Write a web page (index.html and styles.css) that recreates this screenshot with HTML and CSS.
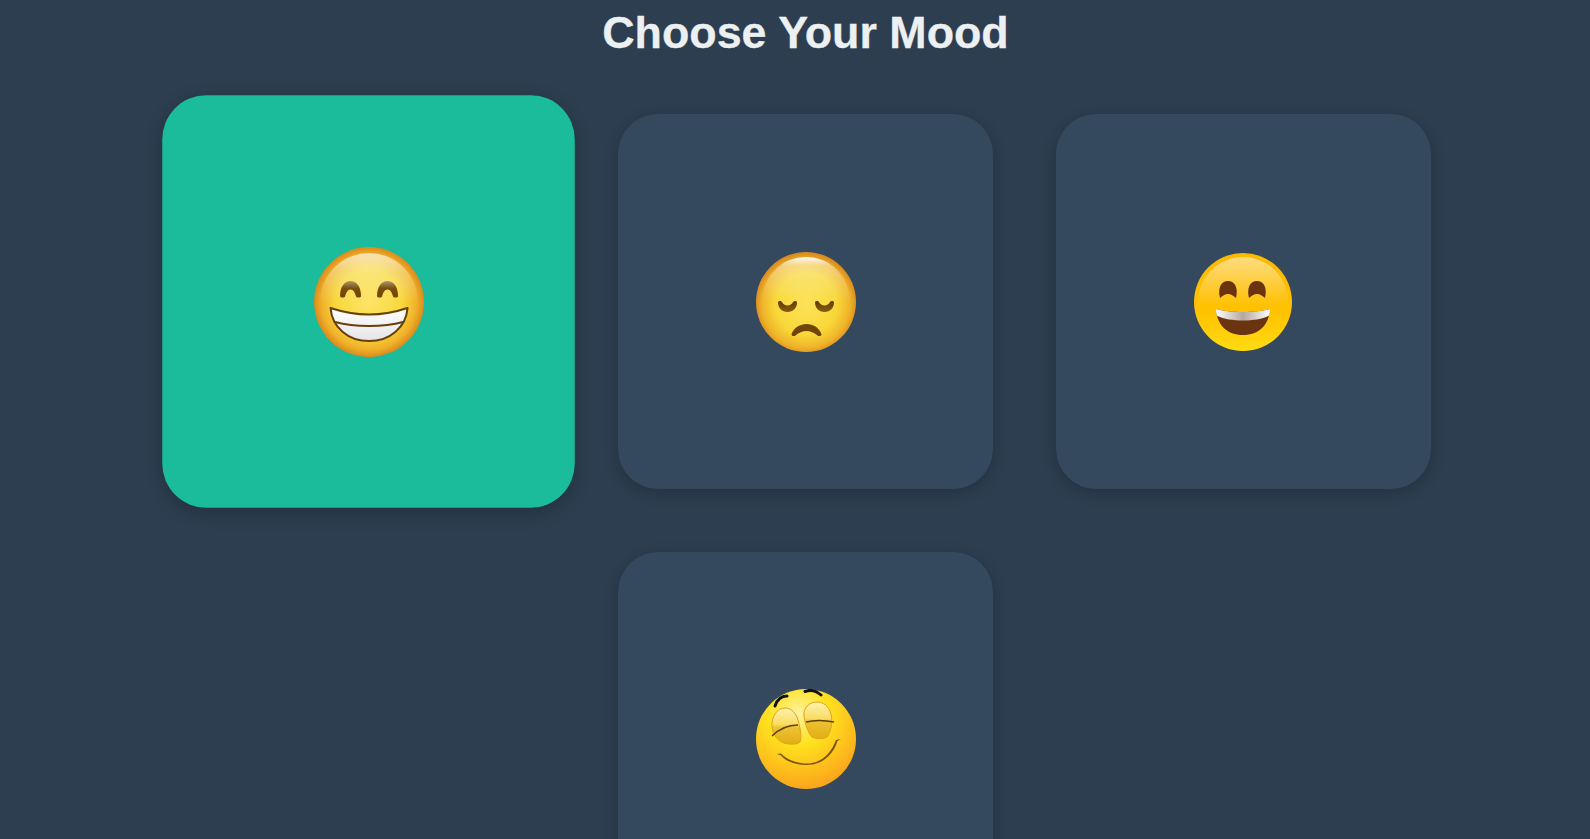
FILE: index.html
```html
<!DOCTYPE html>
<html lang="en">
<head>
<meta charset="utf-8">
<title>Choose Your Mood</title>
<link rel="stylesheet" href="styles.css">
</head>
<body>
<main class="page">
  <h1 class="title">Choose Your Mood</h1>
  <section class="grid">
    <div class="card card-selected">
      <svg class="emoji" viewBox="0 0 110 110" width="100" height="100" role="img" aria-label="Beaming face">
        <defs>
          <radialGradient id="a1" cx="50%" cy="50%" r="50%">
            <stop offset="0" stop-color="#fde468"/><stop offset=".6" stop-color="#f8d83c"/><stop offset=".86" stop-color="#efb22a"/><stop offset="1" stop-color="#dc8a1c"/>
          </radialGradient>
          <linearGradient id="a2" x1="0" y1="0" x2="0" y2="1">
            <stop offset="0" stop-color="#fff" stop-opacity=".65"/><stop offset=".2" stop-color="#fff" stop-opacity=".28"/><stop offset=".5" stop-color="#fff" stop-opacity="0"/>
          </linearGradient>
          <linearGradient id="a3" x1="0" y1="0" x2="0" y2="1">
            <stop offset="0" stop-color="#b09470"/><stop offset=".45" stop-color="#7a4e0c"/><stop offset="1" stop-color="#6e4408"/>
          </linearGradient>
          <linearGradient id="a4" x1="0" y1="0" x2="0" y2="1">
            <stop offset="0" stop-color="#fff"/><stop offset="1" stop-color="#e4e4e8"/>
          </linearGradient>
        </defs>
        <circle cx="55" cy="55" r="55" fill="url(#a1)"/>
        <circle cx="55" cy="55" r="49" fill="url(#a2)"/>
        <path d="M26 49C26 39 31 34 36.500 34S47 39 47 49C47 51 42.500 51 42 49.500C41 46 39.500 42.500 36.500 42.500S32 46 31 49.500C30.500 51 26 51 26 49Z" fill="url(#a3)"/>
        <path d="M63 49C63 39 68 34 73.500 34S84 39 84 49C84 51 79.500 51 79 49.500C78 46 76.500 42.500 73.500 42.500S69 46 68 49.500C67.500 51 63 51 63 49Z" fill="url(#a3)"/>
        <path d="M16.500 61C30 65.500 42 67.500 55 67.500S80 65.500 93.500 61C92 80 76 94 55 94S18 80 16.500 61Z" fill="url(#a4)" stroke="#6a3f06" stroke-width="2" stroke-linejoin="round"/>
        <path d="M21 75C32 78 44 79 55 79S78 78 89 75" fill="none" stroke="#6a3f06" stroke-width="2"/>
      </svg>
    </div>
    <div class="card">
      <svg class="emoji" viewBox="0 0 100 100" width="100" height="100" role="img" aria-label="Pensive face">
        <defs>
          <radialGradient id="b1" cx="50%" cy="52%" r="51%">
            <stop offset="0" stop-color="#fde25a"/><stop offset=".6" stop-color="#f8d838"/><stop offset=".86" stop-color="#efb42a"/><stop offset="1" stop-color="#d98b1e"/>
          </radialGradient>
          <linearGradient id="b2" x1="0" y1="0" x2="0" y2="1">
            <stop offset="0" stop-color="#fff" stop-opacity=".95"/><stop offset=".1" stop-color="#fff" stop-opacity=".4"/><stop offset=".25" stop-color="#fff" stop-opacity=".22"/><stop offset=".5" stop-color="#fff" stop-opacity="0"/>
          </linearGradient>
          <linearGradient id="b3" x1="0" y1="0" x2="0" y2="1">
            <stop offset="0" stop-color="#5f3a04"/><stop offset="1" stop-color="#8a5c10"/>
          </linearGradient>
        </defs>
        <circle cx="50" cy="50" r="50" fill="url(#b1)"/>
        <circle cx="50" cy="49" r="44" fill="url(#b2)"/>
        <path d="M22 50.500C22 48.500 25 48.500 26 50C27 52 29 53.500 31.500 53.500S36 52 37 50C38 48.500 41 48.500 41 50.500C41 56 37 60 31.500 60S22 56 22 50.500Z" fill="url(#b3)"/>
        <path d="M59 50.500C59 48.500 62 48.500 63 50C64 52 66 53.500 68.500 53.500S73 52 74 50C75 48.500 78 48.500 78 50.500C78 56 74 60 68.500 60S59 56 59 50.500Z" fill="url(#b3)"/>
        <path d="M35.500 82C38 75.500 44 72 50.500 72S63 75.500 65.500 82C65.500 84.500 62.500 84.500 61.500 83.500C58 80.500 54.500 79 50.500 79S43 80.500 39.500 83.500C38.500 84.500 35.500 84.500 35.500 82Z" fill="#6f4608"/>
      </svg>
    </div>
    <div class="card">
      <svg class="emoji" viewBox="-1 -1 100 100" width="100" height="100" role="img" aria-label="Smiling face">
        <defs>
          <linearGradient id="c1" x1="0" y1="0" x2="0" y2="1">
            <stop offset="0" stop-color="#fdb900"/><stop offset=".6" stop-color="#ffc200"/><stop offset="1" stop-color="#ffdc12"/>
          </linearGradient>
          <linearGradient id="c2" x1="0" y1="0" x2="0" y2="1">
            <stop offset="0" stop-color="#fff" stop-opacity=".5"/><stop offset=".55" stop-color="#fff" stop-opacity="0"/>
          </linearGradient>
          <linearGradient id="c3" x1="0" y1="0" x2="1" y2="0">
            <stop offset="0" stop-color="#fff"/><stop offset=".5" stop-color="#b5a89e"/><stop offset="1" stop-color="#fff"/>
          </linearGradient>
        </defs>
        <circle cx="49" cy="49" r="49" fill="url(#c1)"/>
        <circle cx="49" cy="49" r="45" fill="url(#c2)"/>
        <path d="M26 45C23.500 35 27 28 34 28S44.500 35 42 45C39.500 43 37 41 34 41S28.500 43 26 45Z" fill="#6b3410"/>
        <path d="M55 45C52.500 35 56 28 63 28S73.500 35 71 45C68.500 43 66 41 63 41S57.500 43 55 45Z" fill="#6b3410"/>
        <path d="M22 56C35 60 63 60 76 56C75 72 65 82 49 82S23 72 22 56Z" fill="#6b3410"/>
        <path d="M22 56C35 60 63 60 76 56C76 60 75.500 62 74.500 63C62 69 36 69 23.500 63C22.500 62 22 60 22 56Z" fill="url(#c3)"/>
      </svg>
    </div>
    <div class="card card-centre">
      <svg class="emoji" viewBox="0 0 100 100" width="100" height="100" role="img" aria-label="Relieved face">
        <defs>
          <radialGradient id="d1" cx="42%" cy="25%" r="80%">
            <stop offset="0" stop-color="#fff2a0"/><stop offset=".38" stop-color="#fee21e"/><stop offset=".8" stop-color="#fdb51c"/><stop offset="1" stop-color="#f79e20"/>
          </radialGradient>
          <linearGradient id="d2" x1="0" y1="0" x2="0" y2="1">
            <stop offset="0" stop-color="#fff3b0"/><stop offset=".45" stop-color="#f9dc60"/><stop offset=".55" stop-color="#ecc132"/><stop offset="1" stop-color="#e2ae14"/>
          </linearGradient>
        </defs>
        <circle cx="50" cy="50" r="50" fill="url(#d1)"/>
        <path d="M29 19C21 19 15 28 16 38C17 46 22 52 28 54C33 55.500 41 56 44 53C46 49 44 36 41 28C38 22 34 19 29 19Z" fill="url(#d2)" stroke="#dfa31a" stroke-width="1"/>
        <path d="M61 13C53 13 47 19 48 27C49 35 52 44 56 48C60 50 67 50 71 48C75 43 77 33 75 25C73 17 67 13 61 13Z" fill="url(#d2)" stroke="#dfa31a" stroke-width="1"/>
        <path d="M16 47C23 40 31 36 42 36" fill="none" stroke="#5e3f06" stroke-width="1.400"/>
        <path d="M50 33C58 31 68 31 78 33" fill="none" stroke="#5e3f06" stroke-width="1.400"/>
        <path d="M21 65L25 64.500C32 72 46 76 56 74C68 72 76 62 80 51L85 50L81.500 52C78 64 68 74 56 75.500C45 77 31 74 25 66.500Z" fill="#7a5408"/>
        <path d="M19 17C21 11 25 7 31 7" fill="none" stroke="#111" stroke-width="3" stroke-linecap="round"/>
        <path d="M49 2.500C54 .500 60 1.500 65 6" fill="none" stroke="#111" stroke-width="3" stroke-linecap="round"/>
      </svg>
    </div>
  </section>
</main>
</body>
</html>
```
FILE: styles.css
```css
html, body {
  margin: 0;
  height: 839px;
  overflow: hidden;
  background: #2c3e50;
}

.page {
  width: 1611px;
  display: flex;
  flex-direction: column;
  align-items: center;
  font-family: "Liberation Sans", Arial, sans-serif;
}

.title {
  margin: 5px 0 0;
  color: #ecf0f1;
  font-size: 44.800px;
  line-height: 54px;
  font-weight: 700;
  -webkit-text-stroke: 0.3px #ecf0f1;
}

.grid {
  display: grid;
  grid-template-columns: repeat(3, 375px);
  grid-auto-rows: 375px;
  gap: 62.500px;
  margin-top: 55px;
}

.card {
  display: flex;
  align-items: center;
  justify-content: center;
  background: #34495e;
  border-radius: 40px;
  box-shadow: 0 4px 15px rgba(0, 0, 0, 0.2);
}

.card-selected {
  background: #1abc9c;
  transform: scale(1.1);
}

.card-centre {
  grid-column: 2;
}

.emoji {
  display: block;
}
```
